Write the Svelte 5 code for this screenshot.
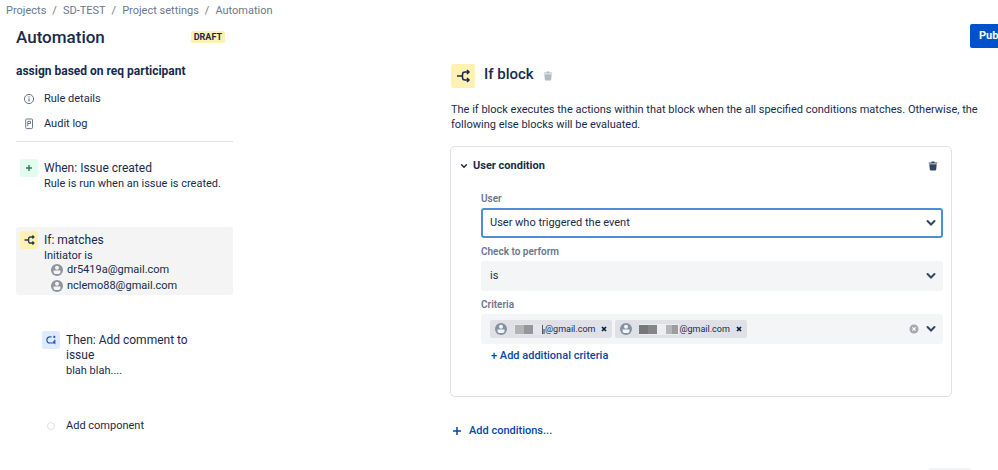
<script>
    let crumbs = ['Projects', 'SD-TEST', 'Project settings', 'Automation'];
    let initiators = ['dr5419a@gmail.com', 'nclemo88@gmail.com'];
    let criteria = [
        { id: 1, email: '@gmail.com' },
        { id: 2, email: '@gmail.com' }
    ];
    let open = true;
    let user = 'User who triggered the event';
    let check = 'is';
    let search = '';

    function removeCriterion(id) {
        criteria = criteria.filter((c) => c.id !== id);
    }
</script>

<div class="page">
    <nav class="crumbs" aria-label="Breadcrumb">
        {#each crumbs as crumb, i}
            {#if i > 0}<span>/</span>{/if}
            <a href="#{crumb}">{crumb}</a>
        {/each}
    </nav>

    <div class="layout">
        <aside>
            <header class="title">
                <h1>Automation</h1>
                <span class="badge">DRAFT</span>
            </header>
            <h2>assign based on req participant</h2>
            <a class="link" href="#details">
                <svg width="12" height="12" viewBox="0 0 12 12" fill="none" stroke="#6b778c">
                    <circle cx="6" cy="6" r="4.6" />
                    <path d="M6 5.4v3M6 3.3v1.1" stroke-width="1.2" />
                </svg>
                Rule details
            </a>
            <a class="link" href="#audit">
                <svg width="12" height="12" viewBox="0 0 12 12" fill="none" stroke="#6b778c">
                    <rect x="2.7" y="1" width="6.8" height="9.6" rx="1" />
                    <path d="M4.8 8.2V3.3h2.7v2.2H4.8" />
                </svg>
                Audit log
            </a>
            <hr />

            <button class="step">
                <span class="icon green">
                    <svg width="18" height="18" viewBox="0 0 18 18" fill="none" stroke="#2f7d5b" stroke-width="1.4">
                        <path d="M9 6v6M6 9h6" />
                    </svg>
                </span>
                <span class="body">
                    <span class="name">When: Issue created</span>
                    <span>Rule is run when an issue is created.</span>
                </span>
            </button>

            <button class="step selected">
                <span class="icon yellow">
                    <svg width="18" height="18" viewBox="0 0 24 24" fill="none" stroke="#253858" stroke-width="1.8">
                        <path d="M6 12h5M18 8h-4a2.500 2.500 0 0 0-2.500 2.500v3a2.500 2.500 0 0 0 2.500 2.500H18M16.500 6l2 2-2 2M16.500 14l2 2-2 2" />
                    </svg>
                </span>
                <span class="body">
                    <span class="name">If: matches</span>
                    <span>Initiator is</span>
                    <span class="people">
                        {#each initiators as email}
                            <span class="person">
                                <svg width="12" height="12" viewBox="0 0 12 12">
                                    <circle cx="6" cy="6" r="6" fill="#8f949c" />
                                    <circle cx="6" cy="3.800" r="2" fill="#f4f4f4" />
                                    <path d="M2.500 6.500h7v1.500a2 2 0 0 1-2 2h-3a2 2 0 0 1-2-2z" fill="#f4f4f4" />
                                </svg>
                                {email}
                            </span>
                        {/each}
                    </span>
                </span>
            </button>

            <button class="step nested">
                <span class="icon blue">
                    <svg width="18" height="18" viewBox="0 0 18 18" fill="none" stroke="#2a559f" stroke-width="1.2">
                        <path d="M9.500 5.800H8a3.100 3.100 0 0 0 0 6.200h4.800M12.800 8.800v3.200l-1.600-1.600" />
                        <path d="M12.300 4.700v2.200M11.200 5.800h2.200" />
                    </svg>
                </span>
                <span class="body">
                    <span class="name">Then: Add comment to issue</span>
                    <span>blah blah....</span>
                </span>
            </button>

            <button class="add-component"><i></i>Add component</button>
        </aside>

        <main>
            <div class="toolbar">
                <button class="publish">Publish</button>
            </div>

            <div class="heading">
                <span class="icon yellow">
                    <svg width="24" height="24" viewBox="0 0 24 24" fill="none" stroke="#172b4d" stroke-width="1.500">
                        <path d="M6 12h5M18 8h-4a2.500 2.500 0 0 0-2.500 2.500v3a2.500 2.500 0 0 0 2.500 2.500H18M16 6l2 2-2 2M16 14l2 2-2 2" />
                    </svg>
                </span>
                <h3>If block</h3>
                <button class="trash light" aria-label="Delete block">
                    <svg width="10" height="10" viewBox="0 0 10 10" fill="currentColor">
                        <path d="M.8 2.600V1.400h2.700V.5h3v.9h2.700v1.200zM1.300 3.200h7.400L8.200 8.500Q8.100 9.500 7.200 9.500H2.800q-.9 0-1-1z" />
                    </svg>
                </button>
            </div>
            <p>The if block executes the actions within that block when the all specified conditions matches. Otherwise, the following else blocks will be evaluated.</p>

            <section class="card">
                <div class="card-head">
                    <button class="toggle" aria-expanded={open} on:click={() => (open = !open)}>
                        <svg width="8" height="8" viewBox="0 0 8 8" fill="none" stroke="#172b4d" stroke-width="1.500" stroke-linecap="round">
                            <path d="M1.600 2.800L4 5.200l2.400-2.400" />
                        </svg>
                        User condition
                    </button>
                    <button class="trash" aria-label="Delete condition">
                        <svg width="10" height="10" viewBox="0 0 10 10" fill="currentColor">
                            <path d="M.8 2.600V1.400h2.700V.5h3v.9h2.700v1.200zM1.300 3.200h7.400L8.200 8.500Q8.100 9.500 7.200 9.500H2.800q-.9 0-1-1z" />
                        </svg>
                    </button>
                </div>

                {#if open}
                    <div class="fields">
                        <label for="user">User</label>
                        <div class="control focused">
                            <select id="user" bind:value={user}>
                                <option>User who triggered the event</option>
                                <option>Assignee</option>
                                <option>Reporter</option>
                            </select>
                            <svg class="chevron" viewBox="0 0 10 10"><path d="M1.500 3L5 6.500 8.500 3" /></svg>
                        </div>

                        <label for="check">Check to perform</label>
                        <div class="control">
                            <select id="check" bind:value={check}>
                                <option>is</option>
                                <option>is not</option>
                            </select>
                            <svg class="chevron" viewBox="0 0 10 10"><path d="M1.500 3L5 6.500 8.500 3" /></svg>
                        </div>

                        <label for="criteria">Criteria</label>
                        <div class="control multi">
                            {#each criteria as c (c.id)}
                                <span class="chip">
                                    <svg width="12" height="12" viewBox="0 0 12 12">
                                        <circle cx="6" cy="6" r="6" fill="#8590a2" />
                                        <circle cx="6" cy="3.800" r="2" fill="#f4f5f7" />
                                        <path d="M2.500 6.500h7v1.500a2 2 0 0 1-2 2h-3a2 2 0 0 1-2-2z" fill="#f4f5f7" />
                                    </svg>
                                    {#if c.id === 1}
                                        <svg class="mask" width="31" height="11" viewBox="0 0 31 11">
                                            <path d="M0 0h28v11H0z" fill="#e4e6ea" />
                                            <path d="M1 1h9v9H1z" fill="#b3b3b5" />
                                            <path d="M10 1h9v9h-9z" fill="#969699" />
                                            <path d="M28 1h1v9h-1z" fill="#555a63" />
                                            <path d="M29 5h2v5h-2z" fill="#8a8d93" />
                                        </svg>
                                    {:else}
                                        <svg class="mask" width="40" height="11" viewBox="0 0 40 11">
                                            <path d="M0 0h40v11H0z" fill="#eceef1" />
                                            <path d="M0 1h9v9H0z" fill="#77777a" />
                                            <path d="M9 1h9v9H9z" fill="#858588" />
                                            <path d="M27 1h6v9h-6z" fill="#b5b5b8" />
                                            <path d="M33 1h6v9h-6z" fill="#9d9da0" />
                                        </svg>
                                    {/if}
                                    <span>{c.email}</span>
                                    <button aria-label="Remove" on:click={() => removeCriterion(c.id)}>
                                        <svg width="6" height="6" viewBox="0 0 6 6" stroke="#091e42" stroke-width="1.700">
                                            <path d="M1 1l4 4M5 1L1 5" />
                                        </svg>
                                    </button>
                                </span>
                            {/each}
                            <input id="criteria" bind:value={search} />
                            <button class="clear" aria-label="Clear all" on:click={() => (criteria = [])}>
                                <svg width="10" height="10" viewBox="0 0 10 10">
                                    <circle cx="5" cy="5" r="4.500" fill="#a5a8ad" />
                                    <path d="M3.400 3.400l3.200 3.200M6.600 3.400L3.400 6.600" stroke="#fff" stroke-width="1.200" />
                                </svg>
                            </button>
                            <svg class="chevron" viewBox="0 0 10 10"><path d="M1.500 3L5 6.500 8.500 3" /></svg>
                        </div>
                        <button class="more">+ Add additional criteria</button>
                    </div>
                {/if}
            </section>

            <button class="add-conditions">
                <svg width="10" height="10" viewBox="0 0 10 10" stroke="#0747a6" stroke-width="1.500">
                    <path d="M5 1v8M1 5h8" />
                </svg>
                Add conditions...
            </button>

            <div class="footer">
                <button class="cancel" aria-label="Cancel"></button>
            </div>
        </main>
    </div>
</div>

<style>
    :global(html) {
        overflow: hidden;
    }
    .page {
        overflow: hidden;
        background: #fff;
        color: #172b4d;
        font: 11px/16px Roboto, "Liberation Sans", sans-serif;
    }
    button, input, select {
        margin: 0;
        padding: 0;
        border: 0;
        background: none;
        color: inherit;
        font: inherit;
        text-align: left;
    }
    button {
        cursor: pointer;
    }
    a {
        color: inherit;
        text-decoration: none;
    }
    svg {
        display: block;
        flex: none;
    }
    h1, h2, h3, p {
        margin: 0;
    }
    .crumbs {
        display: flex;
        gap: 6px;
        height: 20px;
        padding: 2px 0 0 6px;
        box-sizing: border-box;
        align-items: center;
        color: #6b778c;
    }
    .layout {
        display: grid;
        grid-template-columns: 217px minmax(0, 1fr);
        padding-left: 16px;
    }

    /* rule sidebar */
    .title {
        display: flex;
        height: 34px;
        padding-right: 8px;
        align-items: center;
        justify-content: space-between;
    }
    h1 {
        font-size: 17px;
        font-weight: 500;
    }
    .badge {
        padding: 0 3px;
        border-radius: 2px;
        background: #fff0b3;
        font-size: 9px;
        line-height: 12px;
        font-weight: 700;
    }
    h2 {
        margin: 9px 0 11px;
        font-size: 12px;
        line-height: 16px;
        font-weight: 700;
    }
    .link {
        display: flex;
        height: 18px;
        margin-bottom: 7px;
        padding-left: 7px;
        gap: 9px;
        align-items: center;
    }
    hr {
        margin: 8px 0 13px;
        border: 0;
        border-top: 1px solid #dfe1e6;
    }
    .step {
        display: flex;
        width: 100%;
        padding: 4px 4px 1px;
        gap: 6px;
        align-items: flex-start;
        border-radius: 3px;
    }
    .step.selected {
        margin: 34px 0 32px;
        background: #f4f4f4;
    }
    .step.nested {
        padding-left: 26px;
        padding-right: 30px;
    }
    .body {
        display: flex;
        padding-top: 2px;
        flex-direction: column;
    }
    .name {
        font-size: 12px;
        line-height: 15px;
    }
    .people {
        margin-top: -2px;
        padding-left: 7px;
    }
    .person {
        display: flex;
        gap: 4px;
        align-items: center;
    }
    .icon {
        flex: none;
        border-radius: 2px;
    }
    .green {
        background: #e3fcef;
    }
    .yellow {
        background: #fff0b3;
    }
    .blue {
        background: #deebff;
    }
    .add-component {
        display: flex;
        margin-top: 38px;
        padding-left: 31px;
        gap: 11px;
        align-items: center;
    }
    .add-component i {
        width: 8px;
        height: 8px;
        border: 1px solid #dfe1e6;
        border-radius: 50%;
        box-sizing: border-box;
    }

    /* condition editor */
    main {
        padding: 0 18px 0 218px;
    }
    .toolbar {
        display: flex;
        height: 44px;
        margin-right: -84px;
        padding-top: 4px;
        box-sizing: border-box;
        justify-content: flex-end;
        align-items: flex-start;
    }
    .publish {
        width: 94px;
        height: 24px;
        padding: 0 9px;
        border-radius: 2px;
        background: #0052cc;
        color: #fff;
        font-weight: 700;
        white-space: nowrap;
    }
    .heading {
        display: flex;
        gap: 9px;
        align-items: flex-start;
    }
    h3 {
        font-size: 15px;
        line-height: 20px;
        font-weight: 500;
    }
    .trash {
        height: 24px;
        color: #344563;
    }
    .trash.light {
        color: #b3bac5;
    }
    p {
        margin: 14px 0;
        line-height: 15px;
    }
    .card {
        min-height: 251px;
        margin: 0 28px 0 -1px;
        border: 1px solid #dfe1e6;
        border-radius: 5px;
        box-sizing: border-box;
    }
    .card-head {
        display: flex;
        padding: 7px 13px 5px 9px;
        justify-content: space-between;
        align-items: center;
    }
    .toggle {
        display: flex;
        gap: 5px;
        align-items: center;
        font-weight: 700;
    }
    .fields {
        padding: 2px 8px 0 30px;
    }
    label {
        display: block;
        padding: 6px 0 2px;
        color: #6b778c;
        font-size: 10px;
        line-height: 15px;
        font-weight: 600;
    }
    .control {
        display: flex;
        position: relative;
        height: 30px;
        border: 2px solid #f4f5f7;
        border-radius: 3px;
        background: #f4f5f7;
        box-sizing: border-box;
        align-items: center;
    }
    .control.focused {
        border-color: #4c8ed9;
        background: #fff;
    }
    select {
        width: 100%;
        height: 26px;
        padding: 0 30px 0 7px;
        appearance: none;
        outline: 0;
    }
    .chevron {
        position: absolute;
        right: 5px;
        width: 10px;
        height: 10px;
        fill: none;
        stroke: #344563;
        stroke-width: 2;
        stroke-linecap: round;
        pointer-events: none;
    }
    .multi {
        padding: 0 22px 0 7px;
        gap: 3px;
    }
    .chip {
        display: flex;
        height: 18px;
        padding: 0 5px;
        align-items: center;
        border-radius: 2px;
        background: #dfe1e6;
        font-size: 9px;
    }
    .mask {
        margin-left: 7px;
    }
    .chip button {
        margin-left: 6px;
    }
    .multi input {
        min-width: 0;
        flex: 1;
        outline: 0;
    }
    .more {
        margin: 4px 0 0 10px;
        color: #0747a6;
        font-weight: 500;
    }
    .add-conditions {
        display: flex;
        margin-top: 26px;
        padding-left: 1px;
        gap: 7px;
        align-items: center;
        color: #0747a6;
        font-weight: 500;
    }
    .footer {
        display: flex;
        height: 2px;
        margin-top: 29px;
        padding-right: 9px;
        overflow: hidden;
        justify-content: flex-end;
    }
    .cancel {
        width: 42px;
        height: 24px;
        border-radius: 2px;
        background: #f4f5f7;
    }
</style>
